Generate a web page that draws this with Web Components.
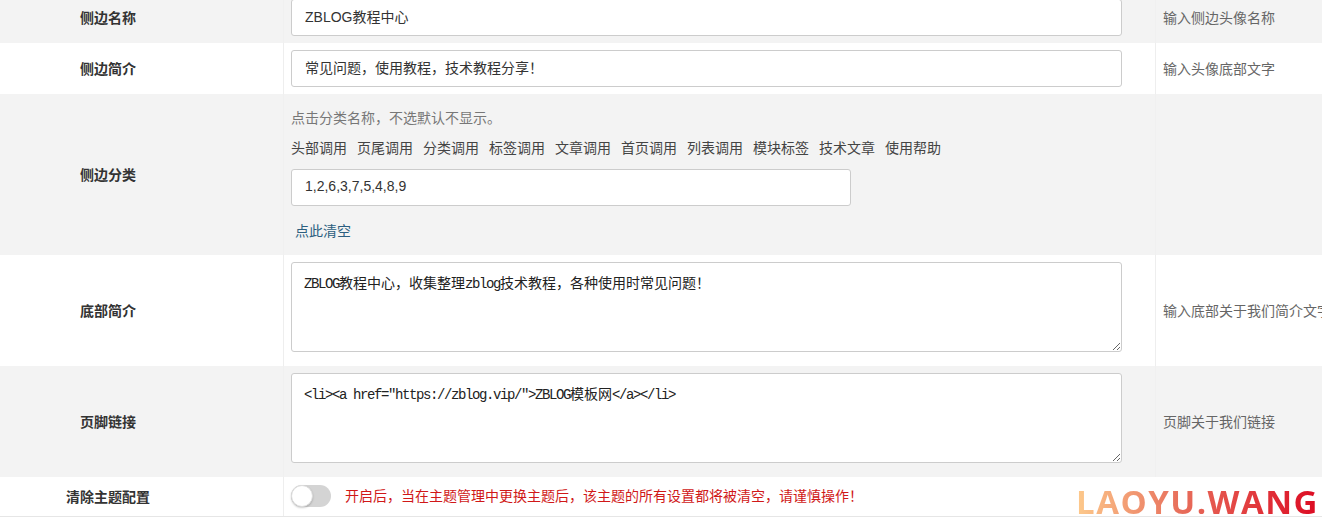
<!DOCTYPE html>
<html lang="zh">
<head>
<meta charset="utf-8">
<title>主题配置</title>
<style>
    html, body {
        margin: 0;
        height: 520px;
        overflow: hidden;
        background: #fff;
        font: 14px/20px "Liberation Sans", "Noto Sans CJK SC", sans-serif;
        color: #333;
    }
</style>
</head>
<body>
<settings-table>
    <settings-row label="侧边名称" hint="输入侧边头像名称" shade>
        <text-field value="ZBLOG教程中心"></text-field>
    </settings-row>
    <settings-row label="侧边简介" hint="输入头像底部文字">
        <text-field value="常见问题，使用教程，技术教程分享！"></text-field>
    </settings-row>
    <settings-row label="侧边分类" shade>
        <category-picker value="1,2,6,3,7,5,4,8,9" note="点击分类名称，不选默认不显示。" clear="点此清空">
            <span>头部调用</span><span>页尾调用</span><span>分类调用</span><span>标签调用</span><span>文章调用</span>
            <span>首页调用</span><span>列表调用</span><span>模块标签</span><span>技术文章</span><span>使用帮助</span>
        </category-picker>
    </settings-row>
    <settings-row label="底部简介" hint="输入底部关于我们简介文字">
        <area-field><b>ZBLOG</b>教程中心，收集整理<b>zblog</b>技术教程，各种使用时常见问题！</area-field>
    </settings-row>
    <settings-row label="页脚链接" hint="页脚关于我们链接" shade>
        <area-field><b>&lt;li&gt;&lt;a href="https://zblog.vip/"&gt;ZBLOG</b>模板网<b>&lt;/a&gt;&lt;/li&gt;</b></area-field>
    </settings-row>
    <settings-row label="清除主题配置" compact>
        <toggle-switch>开启后，当在主题管理中更换主题后，该主题的所有设置都将被清空，请谨慎操作！</toggle-switch>
    </settings-row>
</settings-table>
<site-mark>LAOYU.WANG</site-mark>

<script>
class SettingsTable extends HTMLElement {
    constructor() {
        super();
        this.attachShadow({ mode: 'open' }).innerHTML = `
            <style>
                :host {
                    display: block;
                    margin-top: -8px;
                    border-bottom: 1px solid #e6e6e6;
                }
            </style>
            <slot></slot>
        `;
    }
}

class SettingsRow extends HTMLElement {
    constructor() {
        super();
        this.attachShadow({ mode: 'open' });
    }

    connectedCallback() {
        this.shadowRoot.innerHTML = `
            <style>
                :host {
                    display: grid;
                    grid-template-columns: 284px 872px 1fr;
                    background: #fff;
                }
                :host([shade]) {
                    background: #f3f3f3;
                }
                .label, .body, .hint {
                    display: flex;
                    align-items: center;
                    padding-top: 7px;
                    padding-bottom: 7px;
                    min-width: 0;
                }
                :host([compact]) .body {
                    padding-top: 8px;
                    padding-bottom: 9px;
                    border-right-color: transparent;
                }
                .label {
                    justify-content: center;
                    padding-right: 67px;
                    font-weight: 700;
                    border-right: 1px solid #eee;
                    box-sizing: border-box;
                }
                .body {
                    padding-left: 7px;
                    padding-right: 33px;
                    border-right: 1px solid #eee;
                    box-sizing: border-box;
                }
                .hint {
                    padding-left: 7px;
                    color: #666;
                    white-space: nowrap;
                    overflow: hidden;
                }
                :host([shade]) .label, :host([shade]) .body {
                    border-right-color: #f0f0f0;
                }
            </style>
            <div class="label">${this.getAttribute('label')}</div>
            <div class="body"><slot></slot></div>
            <div class="hint">${this.getAttribute('hint') || ''}</div>
        `;
    }
}

class TextField extends HTMLElement {
    constructor() {
        super();
        this.attachShadow({ mode: 'open' });
    }

    connectedCallback() {
        this.shadowRoot.innerHTML = `
            <style>
                :host {
                    display: block;
                    width: 100%;
                }
                input {
                    display: block;
                    width: 100%;
                    height: 37px;
                    box-sizing: border-box;
                    padding: 0 13px 3px;
                    border: 1px solid #ccc;
                    border-radius: 3px;
                    background: #fff;
                    color: #333;
                    font: inherit;
                    outline: none;
                }
            </style>
            <input type="text" value="${this.getAttribute('value')}">
        `;
    }
}

class AreaField extends HTMLElement {
    constructor() {
        super();
        this.attachShadow({ mode: 'open' }).innerHTML = `
            <style>
                :host {
                    display: block;
                    width: 100%;
                    height: 90px;
                    box-sizing: border-box;
                    margin-bottom: 7px;
                    padding: 10px 12px;
                    border: 1px solid #ccc;
                    border-radius: 3px;
                    background: #fff;
                    color: #222;
                    line-height: 20px;
                    white-space: nowrap;
                    overflow: auto;
                    resize: vertical;
                }
                ::slotted(b) {
                    font: 400 14px/20px "Liberation Mono", monospace;
                    letter-spacing: -1.4px;
                }
            </style>
            <slot></slot>
        `;
    }
}

class CategoryPicker extends HTMLElement {
    constructor() {
        super();
        this.attachShadow({ mode: 'open' });
    }

    connectedCallback() {
        this.shadowRoot.innerHTML = `
            <style>
                :host {
                    display: block;
                    width: 100%;
                    padding: 7px 0;
                }
                .note {
                    color: #777;
                    margin-bottom: 10px;
                }
                .tags {
                    display: flex;
                    gap: 10px;
                    color: #444;
                    margin-bottom: 11px;
                }
                text-field {
                    width: 560px;
                }
                .clear {
                    display: inline-block;
                    margin: 15px 0 0 4px;
                    color: #2c5f7f;
                }
            </style>
            <div class="note">${this.getAttribute('note')}</div>
            <div class="tags"><slot></slot></div>
            <text-field value="${this.getAttribute('value')}"></text-field>
            <a class="clear">${this.getAttribute('clear')}</a>
        `;
    }
}

class ToggleSwitch extends HTMLElement {
    constructor() {
        super();
        this.attachShadow({ mode: 'open' }).innerHTML = `
            <style>
                :host {
                    display: flex;
                    align-items: center;
                    gap: 14px;
                    color: #d01818;
                    white-space: nowrap;
                }
                .track {
                    width: 40px;
                    height: 22px;
                    border-radius: 11px;
                    background: #d4d4d4;
                    display: flex;
                }
                .knob {
                    width: 22px;
                    height: 22px;
                    border-radius: 50%;
                    background: #fff;
                    box-sizing: border-box;
                    border: 1px solid #ddd;
                    box-shadow: 0 1px 2px rgba(0, 0, 0, .2);
                }
            </style>
            <span class="track"><span class="knob"></span></span>
            <slot></slot>
        `;
    }
}

class SiteMark extends HTMLElement {
    constructor() {
        super();
        this.attachShadow({ mode: 'open' }).innerHTML = `
            <style>
                :host {
                    position: absolute;
                    left: 1076px;
                    top: 484px;
                    font: 700 33px/36px "Open Sans", sans-serif;
                    letter-spacing: 1.5px;
                    white-space: nowrap;
                    background: linear-gradient(90deg, #fdca8c, #e8705c 42%, #dc0a22);
                    -webkit-background-clip: text;
                    background-clip: text;
                    color: transparent;
                }
            </style>
            <slot></slot>
        `;
    }
}

customElements.define('settings-table', SettingsTable);
customElements.define('settings-row', SettingsRow);
customElements.define('text-field', TextField);
customElements.define('area-field', AreaField);
customElements.define('category-picker', CategoryPicker);
customElements.define('toggle-switch', ToggleSwitch);
customElements.define('site-mark', SiteMark);
</script>
</body>
</html>
